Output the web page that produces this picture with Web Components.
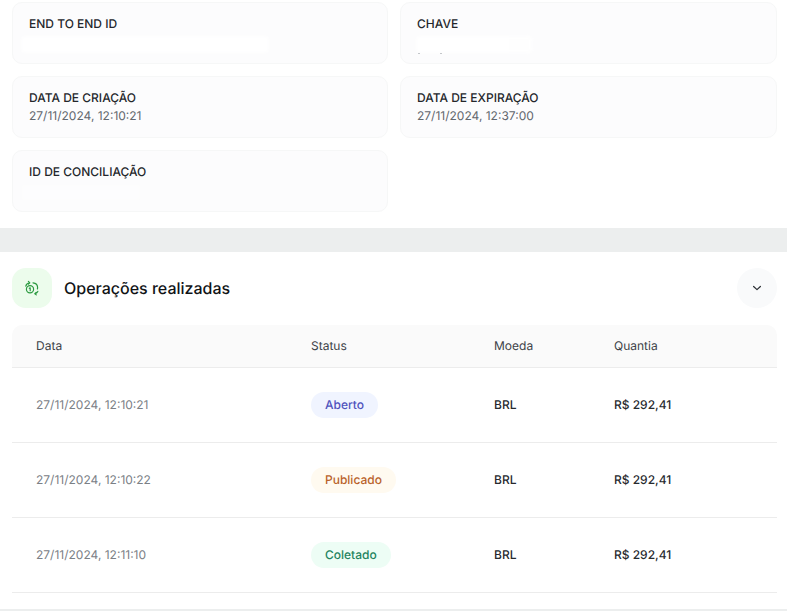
<!DOCTYPE html>
<html lang="pt-BR">
<head>
<meta charset="utf-8">
<title>Operações</title>
<style>
  html, body { margin: 0; padding: 0; background: #fff; }
  body { font-family: Inter, "Liberation Sans", sans-serif; overflow: hidden; height: 611px; text-rendering: geometricPrecision; }
</style>
</head>
<body>
<detail-grid>
  <info-card label="END TO END ID" mask="248"></info-card>
  <info-card label="CHAVE" mask="116" offset="-1" specks></info-card>
  <info-card label="DATA DE CRIAÇÃO" value="27/11/2024, 12:10:21"></info-card>
  <info-card label="DATA DE EXPIRAÇÃO" value="27/11/2024, 12:37:00"></info-card>
  <info-card label="ID DE CONCILIAÇÃO" mask="120" faint></info-card>
</detail-grid>
<operations-panel title="Operações realizadas">
  <op-row date="27/11/2024, 12:10:21" status="Aberto" tone="blue" currency="BRL" amount="R$ 292,41"></op-row>
  <op-row date="27/11/2024, 12:10:22" status="Publicado" tone="orange" currency="BRL" amount="R$ 292,41"></op-row>
  <op-row date="27/11/2024, 12:11:10" status="Coletado" tone="green" currency="BRL" amount="R$ 292,41"></op-row>
</operations-panel>

<script>
class DetailGrid extends HTMLElement {
    constructor() {
        super();
        this.attachShadow({mode: 'open'}).innerHTML = `
            <style>
                :host { display: grid; grid-template-columns: 376px 377px; gap: 12px; padding: 2px 10px 0 12px; height: 228px; box-sizing: border-box; align-content: start; }
            </style>
            <slot></slot>
        `;
    }
}

class InfoCard extends HTMLElement {
    connectedCallback() {
        if (this.shadowRoot) return;
        const value = this.getAttribute('value');
        const mask = this.getAttribute('mask');
        const offset = this.getAttribute('offset') || -8;
        const opacity = this.hasAttribute('faint') ? .35 : .8;
        // os valores sensiveis aparecem cobertos de branco na tela original
        const specks = this.hasAttribute('specks') ? '<i class="speck" style="left:1px"></i><i class="speck" style="left:23px"></i>' : '';
        this.attachShadow({mode: 'open'}).innerHTML = `
            <style>
                :host { display: flex; flex-direction: column; gap: 2px; height: 62px; box-sizing: border-box; padding: 13px 16px 0; background: #fcfcfd; border: 1px solid #f6f7f7; border-radius: 10px; overflow: hidden; }
                .label { font-size: 12px; line-height: 16px; font-weight: 500; color: #24272b; }
                .value { font-size: 12px; line-height: 16px; color: #63686e; }
                .wrap { position: relative; height: 17px; margin-top: 2px; }
                .mask { height: 17px; background: #fff; border-radius: 3px; filter: blur(1.5px); }
                .speck { position: absolute; top: 17px; width: 2px; height: 1px; background: #c4c7ca; }
            </style>
            <div class="label">${this.getAttribute('label')}</div>
            ${value ? `<div class="value">${value}</div>` : ''}
            ${mask ? `<div class="wrap"><div class="mask" style="width:${mask}px;margin-left:${offset}px;opacity:${opacity}"></div>${specks}</div>` : ''}
        `;
    }
}

class OperationsPanel extends HTMLElement {
    connectedCallback() {
        if (this.shadowRoot) return;
        this.attachShadow({mode: 'open'}).innerHTML = `
            <style>
                :host { display: block; border-top: 24px solid #eceeee; border-bottom: 2px solid #eceeee; padding: 0 10px 0 12px; height: 383px; box-sizing: border-box; }
                header { display: flex; align-items: center; gap: 12px; height: 40px; padding-top: 16px; }
                .icon { width: 40px; height: 40px; border-radius: 14px; background: #ecfcec; display: flex; align-items: center; justify-content: center; flex: none; }
                h2 { margin: 0; flex: 1; font-size: 16px; font-weight: 500; color: #101316; line-height: 24px; }
                .toggle { width: 40px; height: 40px; border-radius: 50%; border: 0; padding: 0; background: #f9fafb; display: flex; align-items: center; justify-content: center; }
                .head { display: grid; grid-template-columns: 275px 183px 120px 1fr; height: 43px; margin-top: 17px; padding: 0 0 2px 24px; align-items: center; box-sizing: border-box; background: #fafafa; border-radius: 10px 10px 0 0; border-bottom: 1px solid #ececec; font-size: 12px; color: #3d4248; }
            </style>
            <header>
                <div class="icon">
                    <svg width="16" height="16" viewBox="0 0 16 16" fill="none" stroke="#2b9a40" stroke-width="1.2" stroke-linecap="round" stroke-linejoin="round">
                        <circle cx="6" cy="9.200" r="3.600"/>
                        <path d="M5.300 8.300l.9-.5v2.900"/>
                        <path d="M1.800 6.200C2.200 4.200 3.600 3 5.600 2.800M4.400 1.400l1.400 1.400-1.400 1.300"/>
                        <path d="M9 2.800c2.700.2 4.600 2.200 4.600 4.800 0 .5-.1 1-.2 1.400"/>
                        <path d="M13.800 11.400c-.6 1.200-1.700 2-3 2.300M12.200 12.300l-1.400 1.400 1.500 1.200"/>
                    </svg>
                </div>
                <h2>${this.getAttribute('title')}</h2>
                <button class="toggle" aria-label="Recolher">
                    <svg width="12" height="12" viewBox="0 0 12 12" fill="none" stroke="#2a2e33" stroke-width="1.2" stroke-linecap="round" stroke-linejoin="round"><path d="M2.600 4.500L6 7.600l3.400-3.100"/></svg>
                </button>
            </header>
            <div class="head"><span>Data</span><span>Status</span><span>Moeda</span><span>Quantia</span></div>
            <slot></slot>
        `;
    }
}

class OpRow extends HTMLElement {
    connectedCallback() {
        if (this.shadowRoot) return;
        this.attachShadow({mode: 'open'}).innerHTML = `
            <style>
                :host { display: grid; grid-template-columns: 275px 183px 120px 1fr; height: 75px; padding-left: 24px; align-items: center; box-sizing: border-box; border-bottom: 1px solid #ececec; font-size: 12px; }
                span { padding-bottom: 2px; }
                .date { color: #7b8086; }
                .cur, .amt { color: #272a2e; font-weight: 500; }
                status-pill { justify-self: start; }
            </style>
            <span class="date">${this.getAttribute('date')}</span>
            <status-pill tone="${this.getAttribute('tone')}">${this.getAttribute('status')}</status-pill>
            <span class="cur">${this.getAttribute('currency')}</span>
            <span class="amt">${this.getAttribute('amount')}</span>
        `;
    }
}

class StatusPill extends HTMLElement {
    connectedCallback() {
        if (this.shadowRoot) return;
        const tones = {
            blue: ['#f0f4ff', '#4f53bd'],
            orange: ['#fffaf0', '#b9622a'],
            green: ['#edfdf5', '#1f8460'],
        };
        const [bg, fg] = tones[this.getAttribute('tone')];
        this.attachShadow({mode: 'open'}).innerHTML = `
            <style>
                :host { display: inline-block; height: 26px; line-height: 26px; padding: 0 14px; border-radius: 13px; font-size: 12px; font-weight: 500; background: ${bg}; color: ${fg}; }
            </style>
            <slot></slot>
        `;
    }
}

customElements.define('detail-grid', DetailGrid);
customElements.define('info-card', InfoCard);
customElements.define('operations-panel', OperationsPanel);
customElements.define('op-row', OpRow);
customElements.define('status-pill', StatusPill);
</script>
</body>
</html>
